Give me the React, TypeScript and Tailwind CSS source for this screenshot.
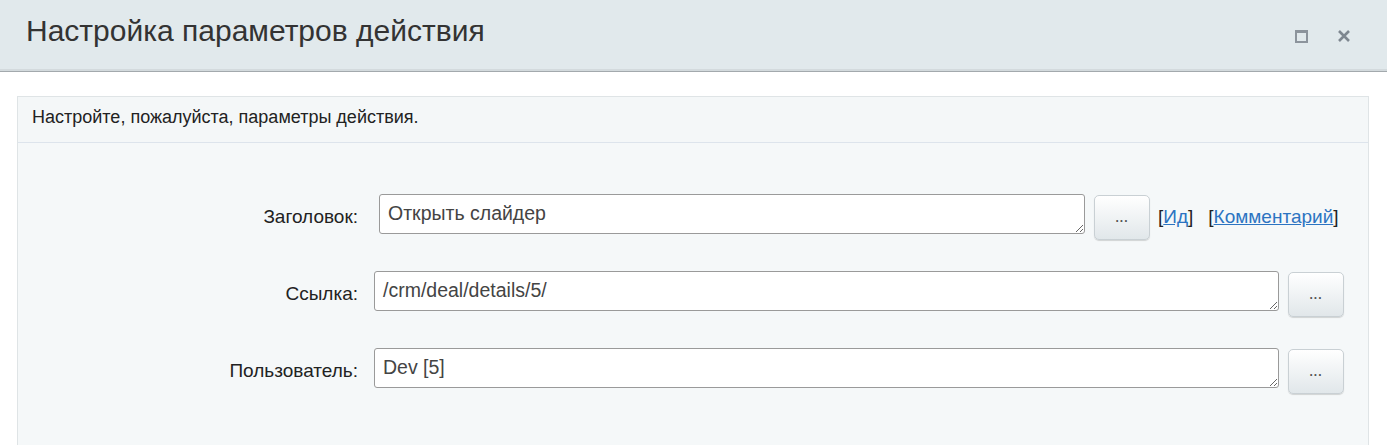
import React from 'react';

const font = { fontFamily: '"Liberation Sans", Arial, sans-serif' };

type Row = { label: string; value: string; shortField?: boolean };

const rows: Row[] = [
  { label: 'Заголовок:', value: 'Открыть слайдер', shortField: true },
  { label: 'Ссылка:', value: '/crm/deal/details/5/' },
  { label: 'Пользователь:', value: 'Dev [5]' },
];

const DotsButton: React.FC = () => (
  <button className="mt-[1px] h-[45px] w-[56px] shrink-0 rounded-[5px] border border-[#c9d0d4] bg-gradient-to-b from-white to-[#e1e7ea] text-[12px] font-bold leading-none tracking-[1px] text-[#555] shadow-[0_1px_1px_rgba(0,0,0,0.15)]">
    ...
  </button>
);

export default function App() {
  return (
    <div className="min-h-[445px] bg-white" style={font}>
      {/* шапка диалога */}
      <div className="flex h-[72px] items-start justify-between border-b border-[#a3a9ad] bg-[#e1e9ec] pl-[26px] pr-[36px] shadow-[inset_0_-2px_0_#d3dadd]">
        <h1 className="mt-[13px] text-[30px] leading-[36px] text-[#333]">Настройка параметров действия</h1>
        <div className="mt-[29px] flex items-center gap-[29px]">
          <span className="block h-[13px] w-[13px] border-2 border-t-[3px] border-[#8c949c]" />
          <svg width="14" height="14" viewBox="0 0 14 14">
            <path d="M2 2 L12 12 M12 2 L2 12" stroke="#7e8790" strokeWidth="2.6" strokeLinecap="butt" />
          </svg>
        </div>
      </div>

      <div className="pl-[17px] pr-[18px] pt-[24px]">
        <div className="border border-[#dfe4e6] bg-[#f5f8f9]">
          <div className="h-[46px] border-b border-[#dde4ec] bg-[#f4f7f8] pl-[14px] pt-[9px] text-[18px] leading-[22px] text-[#222]">
            Настройте, пожалуйста, параметры действия.
          </div>

          <div className="flex flex-col gap-[31px] pb-[60px] pt-[51px]">
            {rows.map((row) => (
              <div key={row.label} className="flex items-start">
                <div className="w-[340px] shrink-0 pt-[12px] text-right text-[19px] leading-[22px] text-[#222]">
                  {row.label}
                </div>
                <textarea
                  readOnly
                  value={row.value}
                  className={`h-[40px] shrink-0 resize-y rounded-[3px] border border-[#9a9a9a] bg-white px-[8px] pt-[7px] text-[19.5px] leading-[22px] text-[#444] outline-none ${
                    row.shortField ? 'ml-[21px] w-[706px]' : 'ml-[16px] w-[905px]'
                  }`}
                  style={font}
                />
                <div className={row.shortField ? 'ml-[9px]' : 'ml-[9px]'}>
                  <DotsButton />
                </div>
                {row.shortField && (
                  <div className="ml-[8px] flex gap-[15px] pt-[12px] text-[19px] leading-[22px] text-[#222]">
                    <span>
                      [<a href="#" className="text-[#2c74c2] underline">Ид</a>]
                    </span>
                    <span>
                      [<a href="#" className="text-[#2c74c2] underline">Комментарий</a>]
                    </span>
                  </div>
                )}
              </div>
            ))}
          </div>
        </div>
      </div>
    </div>
  );
}
